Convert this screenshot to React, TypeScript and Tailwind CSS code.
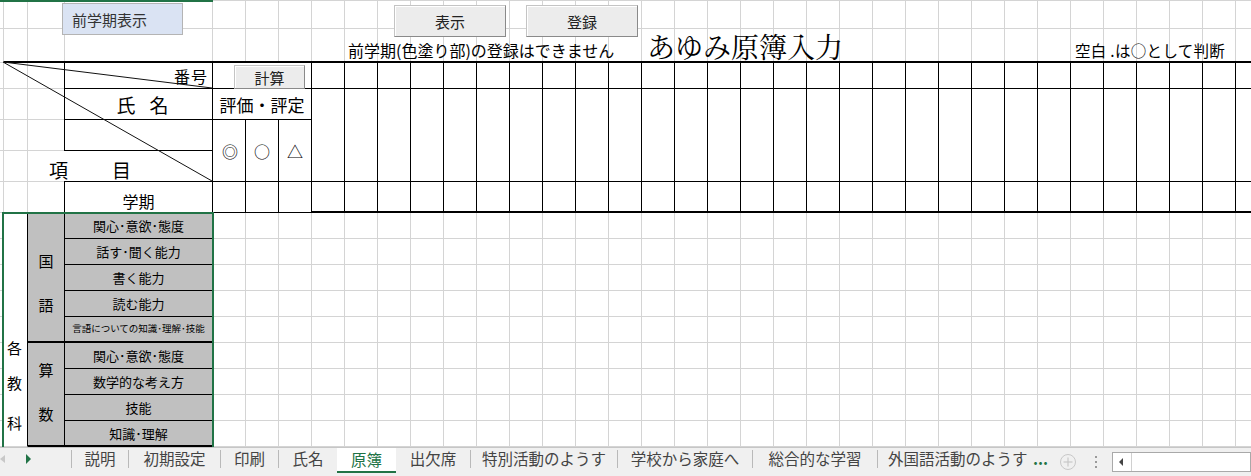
import React from "react";

const gridTpl =
  "grid grid-cols-[4px_24px_37px_148px_33px_33px_33px_repeat(29,33px)] grid-rows-[28px_34px_26px_31px_31px_31px_31px_repeat(9,26px)]";

const btn =
  "flex items-center justify-center bg-[#ececec] border border-[#c4c4c4] border-r-[#8a8a8a] border-b-[#8a8a8a] shadow-[inset_1px_1px_0_#ffffff] text-[15px] leading-none text-[#222]";

const cText =
  "bg-[#c0c0c0] border-r border-black flex items-center justify-center leading-none whitespace-nowrap";

function BaseGrid() {
  const cells = Array.from({ length: 16 * 36 }, (_, i) => (
    <div key={i} className="border-r border-b border-[#d4d4d4]" />
  ));
  return <div className={`col-start-1 row-start-1 ${gridTpl}`}>{cells}</div>;
}

function DataHeader() {
  const cols = Array.from({ length: 29 }, (_, i) => (
    <div key={i} className="w-[33px] shrink-0 flex flex-col">
      <div className="h-[26px] border-r border-b border-black" />
      <div className="h-[93px] border-r border-b border-black" />
      <div className="h-[31px] border-r border-b-2 border-black" />
    </div>
  ));
  return (
    <div className="col-start-8 col-span-29 row-start-3 row-span-5 flex bg-white">
      {cols}
    </div>
  );
}

function Overlay() {
  return (
    <div className={`col-start-1 row-start-1 ${gridTpl}`}>
      {/* green top line */}
      <div className="col-start-1 col-span-4 row-start-1 border-t border-[#217346]" />

      {/* 前学期表示 shape */}
      <div className="col-start-3 col-span-2 row-start-1 row-span-2 self-start justify-self-start ml-[34px] mt-[2px] w-[121px] h-[32px] bg-[#dae3f3] border border-[#b4b4b4] flex items-center pl-[9px] text-[15px] leading-none text-[#333]">
        前学期表示
      </div>

      {/* buttons */}
      <div className="col-start-8 col-span-12 row-start-1 row-span-2 flex items-start gap-[20px] pl-[82px] pt-[4px]">
        <div className={`${btn} w-[112px] h-[32px]`}>表示</div>
        <div className={`${btn} w-[112px] h-[32px]`}>登録</div>
      </div>

      {/* thick line under row 2 */}
      <div className="col-start-2 col-span-35 row-start-2 border-b-2 border-black" />

      {/* row 2 texts */}
      <div className="col-start-9 col-span-9 row-start-2 flex items-end pl-[3px] pb-[4px] whitespace-nowrap text-[16px] leading-[18px]">
        前学期(色塗り部)の登録はできません
      </div>
      <div className="col-start-18 col-span-9 row-start-2 flex items-end pl-[5px] pb-[2px] whitespace-nowrap text-[28px] leading-[30px] font-['Noto_Serif_CJK_JP','Noto_Sans_CJK_JP',serif]">
        あゆみ原簿入力
      </div>
      <div className="col-start-31 col-span-6 row-start-2 flex items-end pl-[4px] pb-[4px] whitespace-nowrap text-[15.5px] leading-[18px] tracking-[0.3px]">
        空白 .は○として判断
      </div>

      {/* C column header */}
      <div className="col-start-4 row-start-3 row-span-5 -ml-px flex flex-col bg-white">
        <div className="h-[26px] border-l border-r border-b border-black flex items-center justify-end pr-[4px] text-[16px] leading-none tracking-[1px]">
          番号
        </div>
        <div className="h-[31px] border-l border-r border-b border-black flex items-center justify-center pl-[8px] text-[19px] leading-none">
          <span>氏</span>
          <span className="ml-[14px]">名</span>
        </div>
        <div className="h-[31px] border-l border-r border-b border-black" />
        <div className="h-[31px] border-r border-b border-black" />
        <div className="h-[31px] border-l border-r border-b border-black flex items-end justify-center pb-[2px] text-[16px] leading-[18px]">
          学期
        </div>
      </div>
      <div className="col-start-3 col-span-2 row-start-6 flex items-end pl-[21px] pb-[1px] text-[19px] leading-[22px]">
        <span>項</span>
        <span className="ml-[44px]">目</span>
      </div>

      {/* D-F header */}
      <div className="col-start-5 col-span-3 row-start-3 row-span-5 flex flex-col bg-white">
        <div className="h-[26px] border-r border-b border-black pl-[21px] pt-[2px]">
          <div className={`${btn} w-[71px] h-[24px]`}>計算</div>
        </div>
        <div className="h-[31px] border-r border-b border-black flex items-center justify-center text-[17px] leading-none whitespace-nowrap">
          評価・評定
        </div>
        <div className="flex h-[62px]">
          <div className="w-[33px] border-r border-b border-black flex items-center justify-center pl-[2px] text-[16px] leading-none">◎</div>
          <div className="w-[33px] border-r border-b border-black flex items-center justify-center text-[16px] leading-none">○</div>
          <div className="w-[33px] border-r border-b border-black flex items-center justify-center text-[16px] leading-none">△</div>
        </div>
        <div className="flex h-[31px]">
          <div className="w-[33px] border-r border-b border-black" />
          <div className="w-[33px] border-r border-b border-black" />
          <div className="w-[33px] border-r border-b border-black" />
        </div>
      </div>

      <DataHeader />

      {/* 各教科 */}
      <div className="col-start-2 row-start-8 row-span-9 bg-white border-r border-b border-r-black border-b-[#d4d4d4] flex flex-col items-center pr-[2px] pt-[127px] text-[15px] leading-[15px]">
        <span>各</span>
        <span className="mt-[20px]">教</span>
        <span className="mt-[25px]">科</span>
      </div>

      {/* 国語 / 算数 */}
      <div className="col-start-3 row-start-8 row-span-5 bg-[#c0c0c0] border-r border-b-2 border-black flex flex-col items-center justify-center gap-[29px] pt-[10px] text-[15px] leading-[15px]">
        <span>国</span>
        <span>語</span>
      </div>
      <div className="col-start-3 row-start-13 row-span-4 bg-[#c0c0c0] border-r border-b-2 border-black flex flex-col items-center justify-center gap-[29px] pb-[5px] text-[15px] leading-[15px]">
        <span>算</span>
        <span>数</span>
      </div>

      {/* C items */}
      <div className={`col-start-4 row-start-8 border-b text-[13px] ${cText}`}>関心･意欲･態度</div>
      <div className={`col-start-4 row-start-9 border-b text-[13px] ${cText}`}>話す･聞く能力</div>
      <div className={`col-start-4 row-start-10 border-b text-[13px] ${cText}`}>書く能力</div>
      <div className={`col-start-4 row-start-11 border-b text-[13px] ${cText}`}>読む能力</div>
      <div className={`col-start-4 row-start-12 border-b-2 text-[9.5px] ${cText}`}>言語についての知識･理解･技能</div>
      <div className={`col-start-4 row-start-13 border-b text-[13px] ${cText}`}>関心･意欲･態度</div>
      <div className={`col-start-4 row-start-14 border-b text-[13px] ${cText}`}>数学的な考え方</div>
      <div className={`col-start-4 row-start-15 border-b text-[13px] ${cText}`}>技能</div>
      <div className={`col-start-4 row-start-16 border-b-2 text-[13px] ${cText}`}>知識･理解</div>

      {/* diagonal lines */}
      <div className="col-start-2 col-span-3 row-start-3 row-span-5 pointer-events-none">
        <svg width="209" height="150" viewBox="0 0 209 150" className="block overflow-visible">
          <line x1="-1" y1="-1" x2="208" y2="25" stroke="#111" strokeWidth="1" />
          <line x1="-1" y1="-1" x2="208" y2="118" stroke="#111" strokeWidth="1" />
        </svg>
      </div>

      {/* selection */}
      <div className="col-start-2 col-span-3 row-start-8 row-span-9 -ml-[2px] -mt-px -mr-px border-l-2 border-t-2 border-r-2 border-[#217346] pointer-events-none" />
    </div>
  );
}

function Sep() {
  return <div className="w-px h-[18px] mt-[2px] bg-[#b9b9b9] shrink-0" />;
}

function Tab({ w, children }: { w: string; children: React.ReactNode }) {
  return <div className={`${w} h-[22px] shrink-0 flex items-center justify-center whitespace-nowrap`}>{children}</div>;
}

function TabBar() {
  return (
    <div className="h-[29px] border-t border-[#c6c6c6] bg-[#f0f0f0] flex items-start text-[15.5px] leading-none text-[#444]">
      <div className="w-[71px] h-[28px] shrink-0">
        <svg width="71" height="28" viewBox="0 0 71 28" className="block">
          <polygon points="5,7 0,11 5,15" fill="#c8c8c8" />
          <polygon points="26,6 31,11 26,16" fill="#217346" />
        </svg>
      </div>
      <Sep />
      <Tab w="w-[56px]">説明</Tab>
      <Sep />
      <Tab w="w-[91px]">初期設定</Tab>
      <Sep />
      <Tab w="w-[57px]">印刷</Tab>
      <Sep />
      <Tab w="w-[58px]">氏名</Tab>
      <div className="w-[59px] h-[25px] shrink-0 bg-white border-b-2 border-[#217346] text-[#217346] flex items-center justify-center">
        原簿
      </div>
      <Tab w="w-[74px]">出欠席</Tab>
      <Sep />
      <Tab w="w-[146px]">特別活動のようす</Tab>
      <Sep />
      <Tab w="w-[134px]">学校から家庭へ</Tab>
      <Sep />
      <Tab w="w-[124px]">総合的な学習</Tab>
      <Sep />
      <div className="w-[150px] h-[22px] shrink-0 flex items-center pl-[10px] whitespace-nowrap">外国語活動のようす</div>
      <div className="w-[25px] h-[22px] shrink-0 flex items-center pl-[5px] text-[#217346] font-bold">...</div>
      <div className="w-[30px] h-[28px] shrink-0 flex items-center justify-center">
        <svg width="18" height="18" viewBox="0 0 18 18">
          <circle cx="9" cy="9" r="7.5" fill="none" stroke="#c8c8c8" strokeWidth="1" />
          <line x1="9" y1="4.5" x2="9" y2="13.5" stroke="#c8c8c8" strokeWidth="1.2" />
          <line x1="4.5" y1="9" x2="13.5" y2="9" stroke="#c8c8c8" strokeWidth="1.2" />
        </svg>
      </div>
      <div className="w-[26px] h-[28px] shrink-0 flex flex-col items-center justify-center gap-[3px]">
        <div className="w-[2px] h-[2px] bg-[#9a9a9a]" />
        <div className="w-[2px] h-[2px] bg-[#9a9a9a]" />
        <div className="w-[2px] h-[2px] bg-[#9a9a9a]" />
      </div>
      <div className="ml-[3px] mt-[4px] h-[20px] flex-1 bg-white border border-[#a9a9a9] flex">
        <div className="w-[19px] h-full border-r border-[#d0d0d0] flex items-center justify-center">
          <svg width="6" height="8" viewBox="0 0 6 8">
            <polygon points="4,0 0,4 4,8" fill="#444" />
          </svg>
        </div>
      </div>
    </div>
  );
}

export default function App() {
  return (
    <div className="w-[1251px] h-[476px] overflow-hidden bg-white font-['Noto_Sans_CJK_JP',sans-serif] text-black">
      <div className="flex h-px">
        <div className="w-[213px] bg-[#217346]" />
        <div className="flex-1 bg-[#d4d4d4]" />
      </div>
      <div className="grid w-[1269px] h-[446px]">
        <BaseGrid />
        <Overlay />
      </div>
      <TabBar />
    </div>
  );
}
